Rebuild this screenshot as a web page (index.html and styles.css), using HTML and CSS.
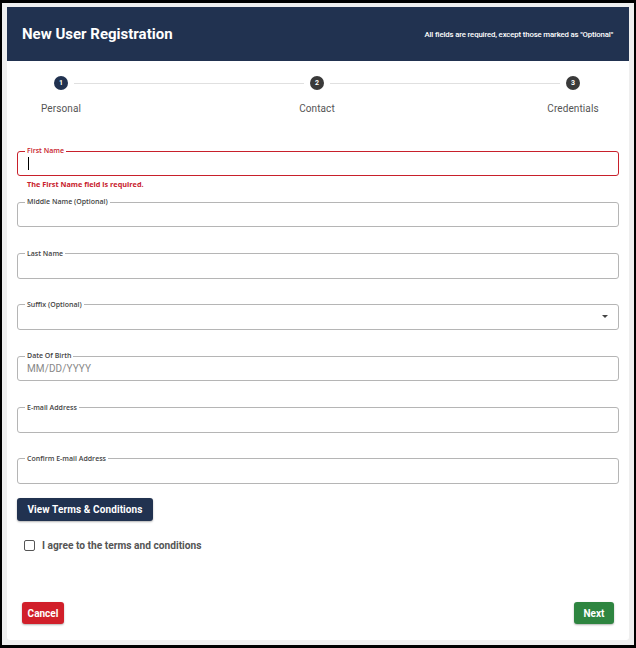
FILE: index.html
```html
<!DOCTYPE html>
<html lang="en">
<head>
<meta charset="utf-8">
<title>New User Registration</title>
<link rel="stylesheet" href="styles.css">
</head>
<body>
<div class="frame">
  <div class="card">
    <header class="header">
      <h1 class="title">New User Registration</h1>
      <p class="note">All fields are required, except those marked as "Optional"</p>
    </header>

    <div class="stepper">
      <div class="step-track">
        <span class="dot dot-active">1</span>
        <span class="track-line"></span>
        <span class="dot">2</span>
        <span class="track-line"></span>
        <span class="dot">3</span>
      </div>
      <div class="step-labels">
        <span class="step-label">Personal</span>
        <span class="step-label">Contact</span>
        <span class="step-label">Credentials</span>
      </div>
    </div>

    <form class="form">
      <div class="field">
        <fieldset class="box box-error">
          <legend class="legend">First Name</legend>
          <div class="input"><span class="caret"></span></div>
        </fieldset>
        <div class="error">The First Name field is required.</div>
      </div>
      <div class="field">
        <fieldset class="box">
          <legend class="legend">Middle Name (Optional)</legend>
          <div class="input"></div>
        </fieldset>
      </div>
      <div class="field">
        <fieldset class="box">
          <legend class="legend">Last Name</legend>
          <div class="input"></div>
        </fieldset>
      </div>
      <div class="field">
        <fieldset class="box">
          <legend class="legend">Suffix (Optional)</legend>
          <div class="input input-select"><span class="arrow"></span></div>
        </fieldset>
      </div>
      <div class="field">
        <fieldset class="box">
          <legend class="legend">Date Of Birth</legend>
          <div class="input"><span class="placeholder">MM/DD/YYYY</span></div>
        </fieldset>
      </div>
      <div class="field">
        <fieldset class="box">
          <legend class="legend">E-mail Address</legend>
          <div class="input"></div>
        </fieldset>
      </div>
      <div class="field">
        <fieldset class="box">
          <legend class="legend">Confirm E-mail Address</legend>
          <div class="input"></div>
        </fieldset>
      </div>

      <div class="terms-row">
        <button type="button" class="btn btn-navy">View Terms &amp; Conditions</button>
      </div>

      <label class="agree">
        <span class="checkbox"></span>
        <span class="agree-text">I agree to the terms and conditions</span>
      </label>
    </form>

    <footer class="footer">
      <button type="button" class="btn btn-red">Cancel</button>
      <button type="button" class="btn btn-green">Next</button>
    </footer>
  </div>
</div>
</body>
</html>
```

FILE: styles.css
```css
* { box-sizing: border-box; }

html, body {
  margin: 0;
  padding: 0;
  background: #000;
}

body {
  width: 636px;
  height: 648px;
  padding: 3px 2px 3px 2px;
  font-family: Roboto, "Liberation Sans", sans-serif;
}

.frame {
  height: 642px;
  background: #efefef;
  padding: 4px 5px 5px 5px;
}

.card {
  height: 633px;
  background: #fff;
  border-radius: 0 0 3px 3px;
  display: flex;
  flex-direction: column;
}

.header {
  height: 54px;
  background: #213250;
  color: #fff;
  display: flex;
  align-items: center;
  justify-content: space-between;
  padding: 0 16px 0 15px;
}

.title {
  margin: 0;
  font-size: 15px;
  font-weight: 700;
  letter-spacing: 0;
}

.note {
  margin: 0;
  font-size: 7.8px;
  font-weight: 500;
  letter-spacing: -0.15px;
}

.stepper {
  padding-top: 15px;
}

.step-track {
  display: flex;
  align-items: center;
  padding: 0 49px 0 47px;
  height: 14px;
}

.dot {
  width: 14px;
  height: 14px;
  border-radius: 50%;
  background: #3a3a3a;
  color: #fff;
  font-size: 7px;
  font-weight: 700;
  display: flex;
  align-items: center;
  justify-content: center;
  flex: none;
}

.dot-active { background: #213250; }

.track-line {
  flex: 1;
  height: 1px;
  background: #e0e0e0;
  margin: 0 6px;
}

.step-labels {
  display: flex;
  justify-content: space-between;
  padding: 0 16px 0 14px;
  margin-top: 13px;
}

.step-label {
  width: 80px;
  text-align: center;
  font-size: 10px;
  line-height: 12px;
  color: #555;
  letter-spacing: 0.1px;
}

.form {
  padding: 32px 10px 0 10px;
  display: flex;
  flex-direction: column;
}

.field {
  height: 51.33px;
}

.field:nth-child(7) { height: auto; }

.box {
  margin: 0;
  padding: 0 9px 2px 7px;
  border: 1px solid #b5b5b5;
  border-radius: 3px;
  min-width: 0;
}

.box-error { border-color: #c8202b; }

.legend {
  padding: 0 2px;
  font-family: "Open Sans", Roboto, sans-serif;
  font-size: 7px;
  line-height: 8px;
  height: 8px;
  font-weight: 600;
  color: #444;
}

.box-error .legend { color: #c8202b; }

.input {
  height: 20px;
  margin-top: -2px;
  padding-left: 2px;
  display: flex;
  align-items: center;
  position: relative;
}

.caret {
  width: 1px;
  height: 13px;
  background: #000;
  margin-left: 1px;
}

.placeholder {
  font-size: 10px;
  color: #888;
  letter-spacing: 0.1px;
}

.input-select { justify-content: flex-end; }

.arrow {
  width: 0;
  height: 0;
  border-left: 3.5px solid transparent;
  border-right: 3.5px solid transparent;
  border-top: 3.5px solid #444;
  margin-right: 1px;
}

.error {
  margin-top: 3px;
  padding-left: 10px;
  font-family: "Open Sans", Roboto, sans-serif;
  font-size: 7.3px;
  line-height: 10px;
  font-weight: 700;
  color: #c8202b;
}

.terms-row {
  margin-top: 14px;
}

.btn {
  border: none;
  border-radius: 3px;
  color: #fff;
  font-family: Roboto, "Liberation Sans", sans-serif;
  font-weight: 700;
  font-size: 10px;
  cursor: pointer;
  box-shadow: 0 1px 2px rgba(0, 0, 0, 0.3);
  padding: 0;
}

.btn-navy {
  background: #213250;
  width: 136px;
  height: 23px;
  letter-spacing: 0.1px;
}

.agree {
  display: flex;
  align-items: center;
  margin-top: 18px;
  padding-left: 7px;
  height: 14px;
}

.checkbox {
  width: 11px;
  height: 11px;
  border: 1.5px solid #555;
  border-radius: 2px;
  flex: none;
}

.agree-text {
  margin-left: 7px;
  font-size: 10.2px;
  font-weight: 700;
  color: #555;
}

.footer {
  margin-top: auto;
  display: flex;
  justify-content: space-between;
  padding: 0 15px 16px 15px;
}

.btn-red {
  background: #d11f2a;
  width: 42px;
  height: 22px;
}

.btn-green {
  background: #2e8540;
  width: 40px;
  height: 22px;
}
```
